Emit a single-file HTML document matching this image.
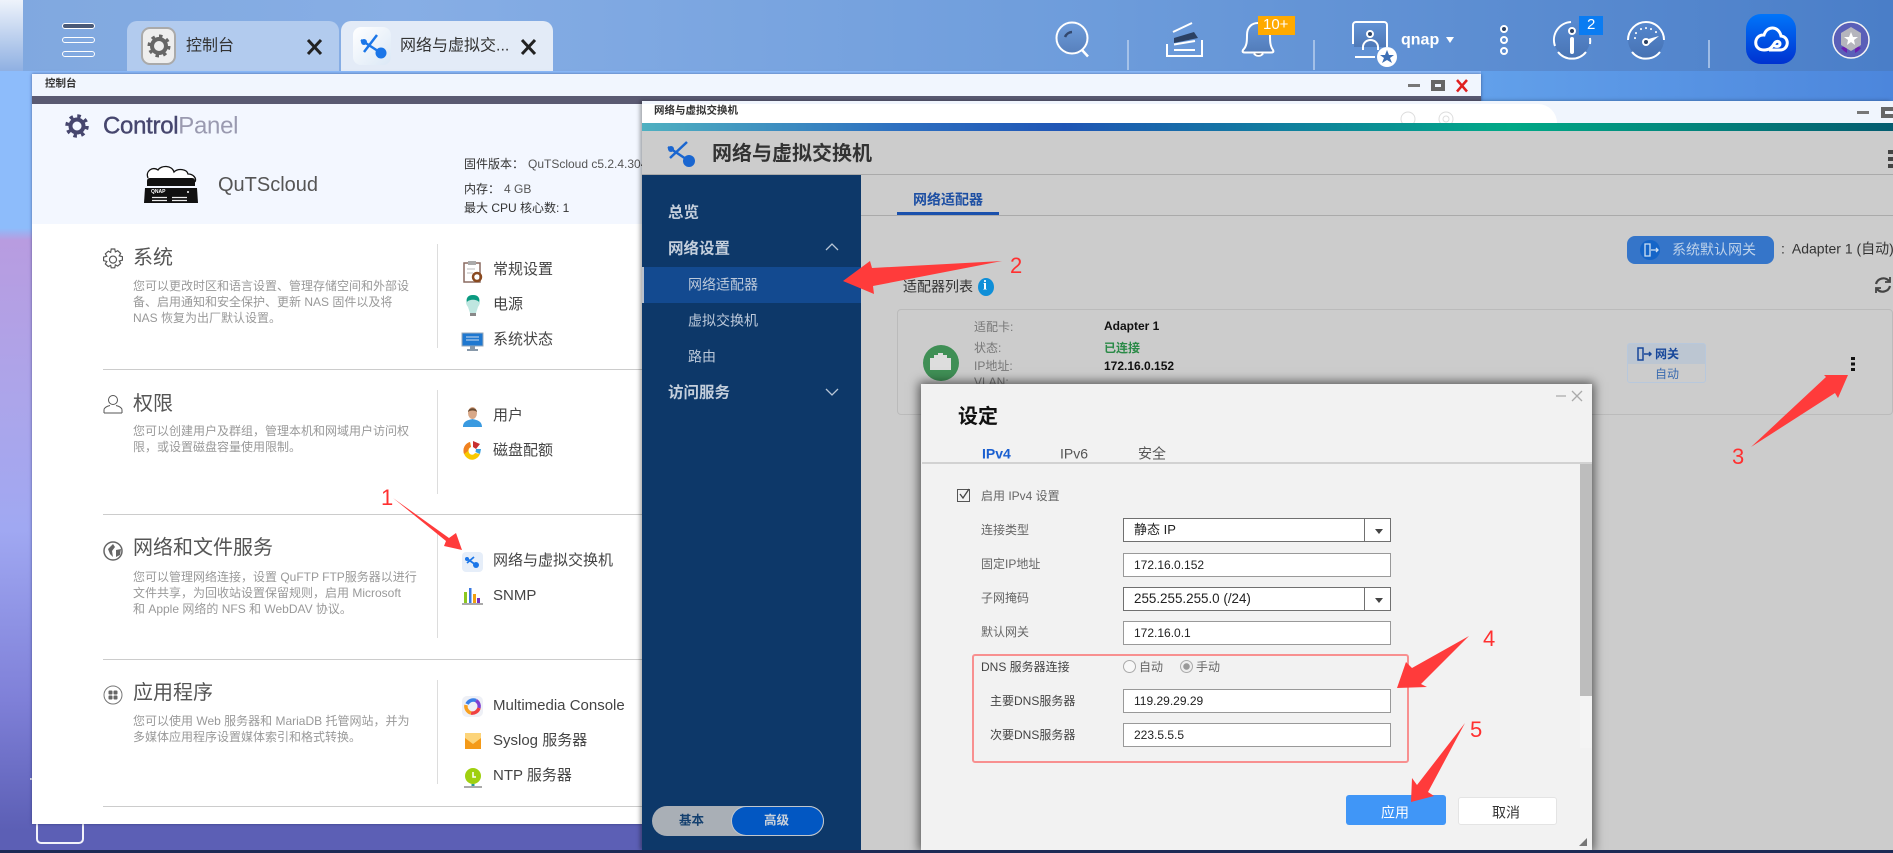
<!DOCTYPE html>
<html lang="zh"><head><meta charset="utf-8"><title>控制台</title>
<style>
html,body{margin:0;padding:0}
body{width:1893px;height:853px;overflow:hidden;position:relative;background:#5c5fb5;font-family:"Liberation Sans","Noto Sans CJK SC",sans-serif;color:#333}
.a{position:absolute}
.t{position:absolute;white-space:nowrap;transform:translateY(-50%);line-height:1.2}
svg{position:absolute;overflow:visible}
.h{font-size:20px;color:#555;left:133px;margin-top:1px}
.d{font-size:12px;color:#999;left:133px}
.i{font-size:15px;color:#444;left:493px}
.hl{position:absolute;left:103px;width:539px;height:1px;background:#ccc}
.vl{position:absolute;left:437px;width:1px;background:#ddd}
.nav{font-size:15.5px;font-weight:bold;color:#c4cfdc;left:668px;margin-top:2px}
.sub{font-size:14px;color:#bcc9da;left:688px;margin-top:1px}
.lb{font-size:12px;color:#777;left:974px}
.val{font-size:12px;font-weight:bold;color:#111;left:1104px}
.f{font-size:12px;color:#666;left:981px}
.inp{position:absolute;left:1123px;width:266px;height:22px;background:#fff;border:1px solid #999}
.sel{border-color:#707070}
.sel:after{content:"";position:absolute;right:25px;top:0;bottom:0;width:1px;background:#707070}
.sel:before{content:"";position:absolute;right:7px;top:10px;border:4px solid transparent;border-top:5px solid #444;border-bottom:0}
.v{font-size:12px;color:#222;left:1134px}
</style></head><body>

<!-- desktop -->
<div class="a" style="left:0;top:0;width:1893px;height:853px;background:linear-gradient(180deg,#8dbcfb 0,#8dbcfb 228px,#b89ce0 240px,#aca5ea 400px,#a0a8f2 530px,#7f80d8 700px,#5c5fb5 830px)"></div>
<div class="a" style="left:1481px;top:71px;width:412px;height:32px;background:linear-gradient(90deg,#62a0ea,#4c86dc)"></div>
<div class="a" style="left:36px;top:815px;width:48px;height:29px;border:2px solid #f2f2fa;border-radius:5px;box-sizing:border-box"></div>
<div class="a" style="left:30px;top:778px;width:3px;height:2px;background:#dde"></div>

<!-- top bar -->
<div class="a" style="left:0;top:0;width:1893px;height:71px;background:linear-gradient(90deg,#80a8df 0,#87aee5 400px,#6d9cdb 1100px,#4a7ec8 1893px)"></div>
<div class="a" style="left:0;top:0;width:23px;height:71px;background:linear-gradient(180deg,#eef3fb,#8fb0e2)"></div>
<div class="a" style="left:62px;top:23px;width:33px;height:6px;border-radius:3px;background:#4a5a78;border:1.5px solid #fff;box-sizing:border-box"></div>
<div class="a" style="left:62px;top:37px;width:33px;height:6px;border-radius:3px;border:1.5px solid #fff;box-sizing:border-box"></div>
<div class="a" style="left:62px;top:51px;width:33px;height:6px;border-radius:3px;border:1.5px solid #fff;box-sizing:border-box"></div>

<div class="a" style="left:127px;top:21px;width:212px;height:50px;background:#b2cbee;border-radius:10px 10px 0 0"></div>
<div class="a" style="left:141px;top:27px;width:35px;height:38px;background:#eee;border:2px solid #aaa;box-sizing:border-box;border-radius:9px"></div>
<svg style="left:146px;top:33px" width="26" height="26" viewBox="0 0 26 26"><circle cx="13" cy="13" r="7" fill="none" stroke="#666" stroke-width="4"/><circle cx="13" cy="13" r="10" fill="none" stroke="#666" stroke-width="3" stroke-dasharray="3.5 4.3"/></svg>
<span class="t" style="left:186px;top:46px;font-size:16px;color:#333">控制台</span>
<svg style="left:306px;top:38px" width="17" height="18"><path d="M2 2 15 16M15 2 2 16" stroke="#222" stroke-width="3"/></svg>

<div class="a" style="left:341px;top:21px;width:212px;height:50px;background:#e3ebf7;border-radius:10px 10px 0 0"></div>
<div class="a" style="left:353px;top:27px;width:38px;height:38px;background:linear-gradient(135deg,#fff,#dbe8f6);border-radius:8px"></div>
<svg style="left:357px;top:32px" width="30" height="28" viewBox="0 0 30 28"><path d="M20 3 7 20M4 8 24 21" stroke="#1b76e8" stroke-width="2.500"/><circle cx="24" cy="21" r="5.500" fill="#1b76e8"/><circle cx="7" cy="10" r="3" fill="#1b76e8"/></svg>
<span class="t" style="left:400px;top:46px;font-size:16px;color:#333">网络与虚拟交...</span>
<svg style="left:520px;top:38px" width="17" height="18"><path d="M2 2 15 16M15 2 2 16" stroke="#222" stroke-width="3"/></svg>

<!-- top right icons -->
<svg style="left:0;top:0" width="1893" height="71" fill="none" stroke="#fff" stroke-width="2">
<defs><linearGradient id="g" x1="0" y1="0" x2="0" y2="1"><stop offset="0" stop-color="#2c4a80" stop-opacity="0"/><stop offset="1" stop-color="#2c4a80" stop-opacity=".35"/></linearGradient></defs>
<circle cx="1072" cy="38" r="15.500" fill="url(#g)"/><path d="M1082 50 1088 56.500" stroke-width="2.500"/><path d="M1065 37a8 8 0 0 1 7-5" stroke="#33486e" stroke-width="2.500"/>
<path d="M1128 40V70M1314 40V70M1709 40V68" stroke="#b8cfee" stroke-width="1.500"/>
<path d="M1173 32 1192 23"/><path d="M1174 38 1194 32 1198 38 1174 43Z" fill="#2b4062" stroke="none"/><path d="M1174 44.500 1195 41M1174 50H1195"/><path d="M1167 44V56H1202V40"/>
<path d="M1247 35C1247 27 1252 23 1258 23 1265 23 1270 27 1270 35 1270 41 1270 46 1273 50 1274 52 1273 52.500 1271 52.500H1245C1243 52.500 1242 52 1243 50 1247 46 1247 41 1247 35Z" fill="url(#g)"/>
<path d="M1254 53.500a5 4 0 0 0 9 0" fill="#2b4062"/>
<path d="M1353 44V25A3 3 0 0 1 1356 22H1384A3 3 0 0 1 1387 25V47"/><path d="M1354 23H1386V47H1354Z" fill="url(#g)" stroke="none"/>
<path d="M1355 57H1375"/><circle cx="1370" cy="34" r="3" fill="#2b4062"/><path d="M1363 50V47a7.500 7 0 0 1 15 0V50"/>
<circle cx="1504" cy="29" r="3" fill="#2b4062"/><circle cx="1504" cy="40" r="3"/><circle cx="1504" cy="51" r="3"/>
<circle cx="1572" cy="40" r="18" fill="url(#g)" stroke="none"/>
<path d="M1571 22A18 18 0 0 0 1555 46M1558 52A18 18 0 0 0 1586 52M1590 38A18 18 0 0 1 1590 44"/>
<path d="M1572 39V52" stroke-width="4" stroke-linecap="round"/><circle cx="1572" cy="31" r="3" fill="#2b4062"/>
<circle cx="1646" cy="40" r="18" fill="url(#g)" stroke="none"/>
<path d="M1628 40A18 18 0 0 1 1664 40M1632 52A18 18 0 0 0 1660 52"/>
<path d="M1645 40 1659 36 1648 45Z" fill="#fff" stroke="none"/><circle cx="1646" cy="42" r="3" fill="#2b4062" stroke="#fff"/>
<path d="M1635 38v.1M1636 33v.1M1641 29v.1M1646 28v.1M1651 29v.1M1656 32v.1" stroke-width="2" stroke-linecap="round"/>
</svg>
<svg style="left:1377px;top:47px" width="20" height="20"><circle cx="10" cy="10" r="10" fill="#fff"/><path d="M10 3 12 8H17L13 11 15 16 10 13 5 16 7 11 3 8H8Z" fill="#3d6fb5"/></svg>
<div class="a" style="left:1258px;top:16px;width:37px;height:19px;background:#ffaa00"></div>
<span class="t" style="left:1263px;top:25px;font-size:15px;color:#fff">10+</span>
<span class="t" style="left:1401px;top:40px;font-size:16px;font-weight:bold;color:#fff">qnap</span>
<div class="a" style="left:1446px;top:37px;border:4.500px solid transparent;border-top:6px solid #fff;border-bottom:0"></div>
<div class="a" style="left:1579px;top:16px;width:24px;height:19px;background:#0a7cf2"></div>
<span class="t" style="left:1587px;top:25px;font-size:15px;color:#fff">2</span>
<div class="a" style="left:1746px;top:14px;width:50px;height:50px;border-radius:15px;background:linear-gradient(180deg,#0075fa,#0032d0)"></div>
<svg style="left:1746px;top:14px" width="50" height="50" fill="none" stroke="#fff" stroke-width="3"><path d="M23 36H34C43 36 44 23 35 22 33 12 21 11 18 21 8 20 6 36 18 36 24 36 26 33 28 30 30 26 34 27 34 30 34 33 29 33 28 31"/></svg>
<svg style="left:1832px;top:21px" width="38" height="38"><circle cx="19" cy="19" r="18" fill="#5a5fb8" stroke="#f4f4f4" stroke-width="1.500"/><path d="M9 27 15 24 15 32 12 30ZM29 27 23 24 23 32 26 30Z" fill="#6a1fb0"/><path d="M19 6 29 12V24L19 30 9 24V12Z" fill="#b5b5bd"/><path d="M19 11 21 16H26L22 19 23 24 19 21 15 24 16 19 12 16H17Z" fill="#fff"/></svg>

<!-- control panel window -->
<div class="a" style="left:32px;top:74px;width:1449px;height:750px;background:#fff;box-shadow:0 0 3px rgba(30,40,90,.6)"></div>
<div class="a" style="left:32px;top:74px;width:1449px;height:22px;background:#f1f6fe"></div>
<div class="a" style="left:32px;top:96px;width:1449px;height:8px;background:#5a5a72"></div>
<span class="t" style="left:45px;top:84px;font-size:10.5px;color:#333;font-weight:bold">控制台</span>
<div class="a" style="left:1408px;top:84px;width:12px;height:3px;background:#777"></div>
<div class="a" style="left:1431px;top:80px;width:14px;height:11px;border:4px solid #666;box-sizing:border-box"></div>
<svg style="left:1456px;top:80px" width="12" height="12"><path d="M1 0 11 11.500M11 0 1 11.500" stroke="#e02020" stroke-width="2.500"/></svg>
<div class="a" style="left:32px;top:104px;width:700px;height:120px;background:#f3f7ff"></div>
<div class="a" style="left:1300px;top:104px;width:260px;height:40px;background:#fff;border-radius:0 40px 0 0"></div>

<svg style="left:64px;top:113px" width="26" height="26" viewBox="0 0 26 26"><circle cx="13" cy="13" r="6.5" fill="none" stroke="#46466e" stroke-width="4"/><circle cx="13" cy="13" r="10" fill="none" stroke="#46466e" stroke-width="3.5" stroke-dasharray="3.5 4.35"/></svg>
<span class="t" style="left:103px;top:127px;font-size:24px;color:#46466e;letter-spacing:-.3px"><span style="font-weight:normal;-webkit-text-stroke:.4px #46466e">Control</span><span style="color:#9a9ab0">Panel</span></span>

<svg style="left:130px;top:110px" width="80" height="100" fill="none">
<path d="M148 178C145 171 153 166 158 170 161 165 172 165 174 172 178 168 187 169 188 174 193 174 197 178 195 182" transform="translate(-130 -110)" stroke="#111" stroke-width="1.300" fill="#fff"/>
<path d="M147 181Q147 178 150 178H192Q195 178 195 181V186H147Z" transform="translate(-130 -110)" fill="#111"/>
<path d="M145 188H197L198 203H144Z" transform="translate(-130 -110)" fill="#111"/>
<g transform="translate(-130 -110)" stroke="#eee" stroke-width="1.200"><path d="M152 197.500H167M172 197.500H187M152 200.500H167M172 200.500H187"/></g>
<circle cx="58" cy="82" r="1" fill="#fff"/>
</svg>
<span class="t" style="left:151px;top:192px;font-size:5px;font-weight:bold;color:#fff">QNAP</span>
<span class="t" style="left:218px;top:185px;font-size:20px;color:#555">QuTScloud</span>
<span class="t" style="left:464px;top:164px;font-size:12px;color:#333">固件版本&#65306;</span>
<span class="t" style="left:528px;top:164px;font-size:12px;color:#555">QuTScloud c5.2.4.3040</span>
<span class="t" style="left:464px;top:189px;font-size:12px;color:#333">内存&#65306;</span>
<span class="t" style="left:504px;top:189px;font-size:12px;color:#555">4 GB</span>
<span class="t" style="left:464px;top:208px;font-size:12px;color:#333">最大 CPU 核心数: 1</span>

<!-- sections -->
<svg style="left:103px;top:249px" width="20" height="20" viewBox="1.500 0.500 17 17" fill="none" stroke="#555"><circle cx="10" cy="9.500" r="3"/><path d="M8.500 1h3l.5 2.500 2-1 2.500 2.200-1.200 2.100 2.700.7v3l-2.700.7 1.200 2.100-2.500 2.200-2-1-.5 2.500h-3L8 14.900l-2 1L3.500 13.700l1.200-2.100L2 10.900v-3l2.700-.7L3.500 5.100 6 2.900l2 1Z" transform="translate(0 -.5)"/></svg>
<span class="t h" style="top:257px">系统</span>
<span class="t d" style="top:286px">您可以更改时区和语言设置、管理存储空间和外部设</span>
<span class="t d" style="top:302px">备、启用通知和安全保护、更新 NAS 固件以及将</span>
<span class="t d" style="top:318px">NAS 恢复为出厂默认设置。</span>
<div class="vl" style="top:244px;height:104px"></div>
<svg style="left:463px;top:261px" width="20" height="22"><rect x="1" y="2" width="16" height="19" fill="#fff" stroke="#8a6a60" stroke-width="1.500"/><rect x="5" y="0" width="8" height="4" fill="#aaa"/><path d="M4 8H12M4 12H10" stroke="#bbb"/><circle cx="14" cy="16" r="4" fill="none" stroke="#8a4a20" stroke-width="2.500"/></svg>
<span class="t i" style="top:270px">常规设置</span>
<svg style="left:465px;top:295px" width="16" height="22"><path d="M8 0C1 0-1 7 3 12L5 18H11L13 12C17 7 15 0 8 0Z" fill="#bfe6e0"/><path d="M8 0C3 0 1 3 2 7 4 4 12 4 14 7 15 3 13 0 8 0Z" fill="#0a9a80"/><rect x="5" y="18" width="6" height="3" fill="#888"/></svg>
<span class="t i" style="top:305px">电源</span>
<svg style="left:462px;top:333px" width="21" height="18"><rect width="21" height="13" fill="#1f78d0" stroke="#9ab"/><path d="M4 4H17M4 7H17" stroke="#cde"/><rect x="8" y="13" width="5" height="3" fill="#89a"/><rect x="5" y="16" width="11" height="2" fill="#89a"/></svg>
<span class="t i" style="top:340px">系统状态</span>
<div class="hl" style="top:369px"></div>

<svg style="left:103px;top:394px" width="20" height="20" fill="none" stroke="#555"><circle cx="10" cy="6" r="4.500"/><path d="M1 19V16C1 13 5 12 7 11.500M19 19V16C19 13 15 12 13 11.500M1 19H19"/></svg>
<span class="t h" style="top:403px">权限</span>
<span class="t d" style="top:431px">您可以创建用户及群组&#65292;管理本机和网域用户访问权</span>
<span class="t d" style="top:447px">限&#65292;或设置磁盘容量使用限制。</span>
<div class="vl" style="top:390px;height:104px"></div>
<svg style="left:463px;top:407px" width="19" height="20"><path d="M0 20C0 14 5 13 9.500 12 14 13 19 14 19 20Z" fill="#3a9ae0"/><ellipse cx="9.500" cy="6" rx="4.500" ry="6" fill="#d8a888"/><path d="M5 5C5 0 14 0 14 5 12 3 7 3 5 5Z" fill="#6a4a30"/></svg>
<span class="t i" style="top:416px">用户</span>
<svg style="left:463px;top:441px" width="18" height="19"><path d="M7 1A8.500 9 0 1 0 17 13L12 12A3.500 4 0 1 1 8 6Z" fill="#f8c800"/><path d="M7 1A8.500 9 0 0 0 1 13L5 10A3.500 4 0 0 1 8 6Z" fill="#f08020"/><path d="M10 0 17 3 13 8 10 6Z" fill="#c83030"/><path d="M13 8 18 8 17 13 12.500 11Z" fill="#38a0e0"/></svg>
<span class="t i" style="top:451px">磁盘配额</span>
<div class="hl" style="top:514px"></div>

<svg style="left:103px;top:541px" width="20" height="20"><circle cx="10" cy="10" r="9" fill="#fff" stroke="#666" stroke-width="1.500"/><path d="M5 8 10 3 12 6 9 10 10 16 7 13ZM13 9 18 8 17 14 13 16Z" fill="#666"/></svg>
<span class="t h" style="top:547px">网络和文件服务</span>
<span class="t d" style="top:577px">您可以管理网络连接&#65292;设置 QuFTP FTP服务器以进行</span>
<span class="t d" style="top:593px">文件共享&#65292;为回收站设置保留规则&#65292;启用 Microsoft</span>
<span class="t d" style="top:609px">和 Apple 网络的 NFS 和 WebDAV 协议。</span>
<div class="vl" style="top:534px;height:104px"></div>
<div class="a" style="left:462px;top:552px;width:21px;height:20px;background:#e6eef9;border-radius:4px"></div>
<svg style="left:462px;top:552px" width="21" height="20"><path d="M12 5 5 11M4 6 14 13" stroke="#1b76e8" stroke-width="1.800"/><circle cx="14" cy="13" r="3" fill="#1b76e8"/><circle cx="5" cy="7" r="2" fill="#1b76e8"/></svg>
<span class="t i" style="top:561px">网络与虚拟交换机</span>
<svg style="left:462px;top:588px" width="21" height="17"><rect x="2" y="4" width="3" height="11" fill="#8cc820"/><rect x="7" y="0" width="2.500" height="15" fill="#3878e0"/><rect x="11" y="6" width="3" height="9" fill="#f0a010"/><rect x="15" y="10" width="3" height="5" fill="#7a30c0"/><rect y="15" width="21" height="2" fill="#aaa"/></svg>
<span class="t i" style="top:596px">SNMP</span>
<div class="hl" style="top:659px"></div>

<svg style="left:103px;top:685px" width="20" height="20"><circle cx="10" cy="10" r="9" fill="#fff" stroke="#777"/><rect x="5.500" y="5.500" width="4" height="4" rx="1" fill="#666"/><rect x="10.500" y="5.500" width="4" height="4" rx="1" fill="#666"/><rect x="5.500" y="10.500" width="4" height="4" rx="1" fill="#666"/><rect x="10.500" y="10.500" width="4" height="4" rx="1" fill="#666"/></svg>
<span class="t h" style="top:692px">应用程序</span>
<span class="t d" style="top:721px">您可以使用 Web 服务器和 MariaDB 托管网站&#65292;并为</span>
<span class="t d" style="top:737px">多媒体应用程序设置媒体索引和格式转换。</span>
<div class="vl" style="top:680px;height:104px"></div>
<div class="a" style="left:462px;top:696px;width:21px;height:21px;background:#eef0f6;border-radius:5px"></div>
<svg style="left:464px;top:698px" width="17" height="17" fill="none" stroke-width="3.500"><path d="M3 6A7 7 0 0 1 12 2.500" stroke="#3a80e8"/><path d="M12 2.500A7 7 0 0 1 15 10" stroke="#8040d0"/><path d="M15 10A7 7 0 0 1 7 15" stroke="#f04040"/><path d="M7 15A7 7 0 0 1 2 7" stroke="#f8a020"/></svg>
<span class="t i" style="top:706px">Multimedia Console</span>
<svg style="left:465px;top:733px" width="16" height="16"><rect width="16" height="16" fill="#fcd47a"/><path d="M0 5 8 11 16 5V16H0Z" fill="#f49a18"/></svg>
<span class="t i" style="top:741px">Syslog 服务器</span>
<svg style="left:464px;top:768px" width="18" height="20"><circle cx="9" cy="8" r="8" fill="#a0d010"/><path d="M9 4V9H12" stroke="#fff" fill="none" stroke-width="1.500"/><path d="M9 16V19" stroke="#2a9a90" stroke-width="3"/><rect y="18" width="18" height="2" fill="#aaa"/></svg>
<span class="t i" style="top:776px">NTP 服务器</span>
<div class="hl" style="top:806px"></div>

<!-- network window -->
<div class="a" style="left:642px;top:101px;width:1251px;height:749px;background:#ccc;box-shadow:-2px 0 4px rgba(0,0,0,.35)"></div>
<div class="a" style="left:642px;top:101px;width:1251px;height:22px;background:#f0f5fd"></div>
<div class="a" style="left:642px;top:104px;width:839px;height:19px;background:#fff"></div>
<div class="a" style="left:1481px;top:104px;width:76px;height:19px;background:#fff;border-radius:0 30px 0 0"></div>
<svg style="left:1398px;top:104px" width="60" height="19" fill="none" stroke="#ddd"><circle cx="10" cy="15" r="7"/><circle cx="48" cy="15" r="7"/><circle cx="48" cy="15" r="3"/></svg>
<div class="a" style="left:642px;top:123px;width:1251px;height:8px;background:linear-gradient(90deg,#4fb0c0 0,#2d6fc0 258px,#1f55b5 422px,#00a986 867px,#045c70 1251px)"></div>
<span class="t" style="left:654px;top:111px;font-size:10.5px;font-weight:bold;color:#333">网络与虚拟交换机</span>
<div class="a" style="left:1857px;top:111px;width:12px;height:3px;background:#777"></div>
<div class="a" style="left:1881px;top:107px;width:12px;height:11px;border:4px solid #666;border-right:0;box-sizing:border-box"></div>
<svg style="left:664px;top:140px" width="32" height="28"><path d="M23 2 6 18M4 7 25 21" stroke="#1a66d0" stroke-width="2.500"/><circle cx="25" cy="21" r="6" fill="#1a66d0"/><circle cx="7" cy="9" r="3" fill="#1a66d0"/></svg>
<span class="t" style="left:712px;top:154px;font-size:20px;font-weight:bold;color:#333">网络与虚拟交换机</span>
<div class="a" style="left:1888px;top:150px;width:5px;height:18px;background:repeating-linear-gradient(180deg,#444 0 4px,transparent 4px 7px)"></div>
<div class="a" style="left:642px;top:174px;width:1251px;height:1px;background:#aaa"></div>

<div class="a" style="left:642px;top:175px;width:219px;height:675px;background:#0d3869"></div>
<span class="t nav" style="top:212px">总览</span>
<span class="t nav" style="top:248px">网络设置</span>
<svg style="left:825px;top:243px" width="14" height="8" fill="none" stroke="#b8c6d6" stroke-width="1.300"><path d="M1 7 7 1 13 7"/></svg>
<div class="a" style="left:642px;top:267px;width:219px;height:36px;background:#134a90"></div>
<div class="a" style="left:642px;top:267px;width:2px;height:36px;background:#b8c0cc"></div>
<span class="t sub" style="top:284px">网络适配器</span>
<span class="t sub" style="top:320px">虚拟交换机</span>
<span class="t sub" style="top:356px">路由</span>
<span class="t nav" style="top:392px">访问服务</span>
<svg style="left:825px;top:388px" width="14" height="8" fill="none" stroke="#b8c6d6" stroke-width="1.300"><path d="M1 1 7 7 13 1"/></svg>

<div class="a" style="left:652px;top:806px;width:172px;height:30px;background:#a9afb6;border-radius:15px"></div>
<div class="a" style="left:732px;top:807px;width:91px;height:28px;background:#0257c2;border-radius:14px;box-shadow:0 0 0 1px #c0c6cc"></div>
<span class="t" style="left:679px;top:821px;font-size:12.500px;font-weight:bold;color:#14406f">基本</span>
<span class="t" style="left:764px;top:821px;font-size:12.500px;font-weight:bold;color:#c8d0da">高级</span>

<span class="t" style="left:913px;top:200px;font-size:14px;font-weight:bold;color:#1d4fa3">网络适配器</span>
<div class="a" style="left:861px;top:215px;width:1032px;height:1px;background:#aaa"></div>
<div class="a" style="left:897px;top:212px;width:102px;height:3px;background:#1a50ac"></div>

<div class="a" style="left:1627px;top:236px;width:147px;height:28px;background:#3575c9;border-radius:8px"></div>
<div class="a" style="left:1640px;top:240px;width:20px;height:20px;background:#1565c8;border-radius:50%"></div>
<svg style="left:1644px;top:243px" width="16" height="14" fill="none" stroke="#cfe0f2" stroke-width="1.300"><path d="M1 1H6V13H1ZM7 7H14M12 5 14 7 12 9"/></svg>
<span class="t" style="left:1672px;top:250px;font-size:14px;color:#bed2ea">系统默认网关</span>
<span class="t" style="left:1781px;top:249px;font-size:14px;color:#333">:&nbsp; Adapter 1 (自动)</span>
<span class="t" style="left:903px;top:287px;font-size:14px;color:#333">适配器列表</span>
<div class="a" style="left:978px;top:278px;width:16px;height:18px;background:#0f8fd8;border-radius:50%"></div>
<span class="t" style="left:983px;top:287px;font-size:14px;font-weight:bold;color:#fff;font-family:'Liberation Serif',serif">i</span>
<svg style="left:1874px;top:276px" width="18" height="18" fill="none" stroke="#444" stroke-width="2.200"><path d="M15 5A7.500 7.500 0 0 0 2 8M3 13A7.500 7.500 0 0 0 16 10"/><path d="M16 1V6H11M2 17V12H7" stroke-width="1.800"/></svg>

<div class="a" style="left:897px;top:309px;width:996px;height:106px;border:1px solid #bbb;border-radius:4px;box-sizing:border-box"></div>
<div class="a" style="left:923px;top:345px;width:36px;height:36px;background:#3f8f55;border-radius:50%"></div>
<svg style="left:930px;top:353px" width="22" height="18"><path d="M0 17V5H4V2H8V0H13V2H17V5H21V17Z" fill="#ddd"/></svg>
<span class="t lb" style="top:327px">适配卡:</span>
<span class="t lb" style="top:348px">状态:</span>
<span class="t lb" style="top:366px">IP地址:</span>
<span class="t lb" style="top:382px">VLAN:</span>
<span class="t val" style="top:326px">Adapter 1</span>
<span class="t val" style="top:348px;color:#2a8a47">已连接</span>
<span class="t val" style="top:366px">172.16.0.152</span>

<div class="a" style="left:1627px;top:343px;width:79px;height:40px;border:1px solid #b8c8dc;border-radius:3px;box-sizing:border-box;background:linear-gradient(180deg,#bcc6d2 0,#bcc6d2 20px,#ccc 20px)"></div>
<svg style="left:1637px;top:347px" width="16" height="14" fill="none" stroke="#17479a" stroke-width="1.500"><path d="M1 1H6V13H1ZM7 7H14M12 5 14 7 12 9"/></svg>
<span class="t" style="left:1655px;top:354px;font-size:12px;font-weight:bold;color:#17479a">网关</span>
<span class="t" style="left:1655px;top:374px;font-size:12px;color:#3a6bb0">自动</span>
<div class="a" style="left:1851px;top:357px;width:4px;height:14px;background:repeating-linear-gradient(180deg,#111 0 3px,transparent 3px 5.500px)"></div>

<!-- dialog -->
<div class="a" style="left:921px;top:384px;width:671px;height:466px;background:#f2f2f2;box-shadow:0 0 10px 2px rgba(0,0,0,.6)"></div>
<svg style="left:1555px;top:390px" width="32" height="12" stroke="#aaa" stroke-width="1.300" fill="none"><path d="M1 6H11M17 1 27 11M27 1 17 11"/></svg>
<span class="t" style="left:958px;top:417px;font-size:20px;font-weight:bold;color:#111">设定</span>
<span class="t" style="left:982px;top:454px;font-size:14px;font-weight:bold;color:#1a5fd0">IPv4</span>
<span class="t" style="left:1060px;top:454px;font-size:14px;color:#555">IPv6</span>
<span class="t" style="left:1138px;top:454px;font-size:14px;color:#555">安全</span>
<div class="a" style="left:922px;top:462px;width:670px;height:2px;background:#d2d2d2"></div>
<div class="a" style="left:1580px;top:464px;width:12px;height:232px;background:#bdbdbd"></div>
<div class="a" style="left:1580px;top:696px;width:12px;height:52px;background:#f4f4f4"></div>

<div class="a" style="left:957px;top:489px;width:11px;height:11px;border:1px solid #555"></div>
<svg style="left:958px;top:488px" width="13" height="12" fill="none" stroke="#444" stroke-width="1.300"><path d="M2 6 5 10 11 1"/></svg>
<span class="t f" style="top:496px">启用 IPv4 设置</span>
<span class="t f" style="top:530px">连接类型</span>
<div class="inp sel" style="top:518px"></div><span class="t v" style="top:530px;font-size:13px">静态 IP</span>
<span class="t f" style="top:564px">固定IP地址</span>
<div class="inp" style="top:553px"></div><span class="t v" style="top:565px">172.16.0.152</span>
<span class="t f" style="top:598px">子网掩码</span>
<div class="inp sel" style="top:587px"></div><span class="t v" style="top:599px;font-size:13.400px">255.255.255.0 (/24)</span>
<span class="t f" style="top:632px">默认网关</span>
<div class="inp" style="top:621px"></div><span class="t v" style="top:633px">172.16.0.1</span>

<div class="a" style="left:972px;top:654px;width:437px;height:109px;border:2px solid #f89090;border-radius:3px;box-sizing:border-box"></div>
<span class="t f" style="top:667px;color:#444">DNS 服务器连接</span>
<div class="a" style="left:1123px;top:660px;width:11px;height:11px;border:1px solid #aaa;border-radius:50%;background:#f8f8f8"></div>
<span class="t f" style="left:1139px;top:667px">自动</span>
<div class="a" style="left:1180px;top:660px;width:11px;height:11px;border:1px solid #aaa;border-radius:50%;background:radial-gradient(circle,#999 0 3px,#eee 3.500px)"></div>
<span class="t f" style="left:1196px;top:667px">手动</span>
<span class="t f" style="left:990px;top:701px;color:#444">主要DNS服务器</span>
<div class="inp" style="top:689px"></div><span class="t v" style="top:701px">119.29.29.29</span>
<span class="t f" style="left:990px;top:735px;color:#444">次要DNS服务器</span>
<div class="inp" style="top:723px"></div><span class="t v" style="top:735px">223.5.5.5</span>

<div class="a" style="left:1346px;top:795px;width:100px;height:30px;background:#4096f7;border-radius:3px"></div>
<span class="t" style="left:1381px;top:813px;font-size:14px;color:#fff">应用</span>
<div class="a" style="left:1458px;top:797px;width:99px;height:28px;background:#fff;border:1px solid #e4e4e4;border-radius:3px;box-sizing:border-box"></div>
<span class="t" style="left:1492px;top:813px;font-size:14px;color:#333">取消</span>
<svg style="left:1579px;top:838px" width="9" height="9"><path d="M8 0V8H0Z" fill="#777"/></svg>
<div class="a" style="left:0;top:850px;width:1893px;height:3px;background:#1d2a55"></div>

<!-- annotations -->
<svg style="left:0;top:0" width="1893" height="853" fill="#ff3b3b">
<path d="M393 498 449 538 456 533 462 550 444 546 446 541Z"/>
<path d="M1002 261 872 268 870 261 843 281 874 294 873 286Z"/>
<path d="M1751 447 1826 377 1824 375 1848 375 1838 398 1835 393Z"/>
<path d="M1469 636 1421 684 1427 687 1397 688 1406 662 1412 668Z"/>
<path d="M1465 723 1428 792 1434 796 1411 802 1412 778 1417 785Z"/>
<text x="381" y="505" font-size="22" font-family="Liberation Sans" fill="#ff3030">1</text>
<text x="1010" y="273" font-size="22" font-family="Liberation Sans" fill="#ff3030">2</text>
<text x="1732" y="464" font-size="22" font-family="Liberation Sans" fill="#ff3030">3</text>
<text x="1483" y="646" font-size="22" font-family="Liberation Sans" fill="#ff3030">4</text>
<text x="1470" y="737" font-size="22" font-family="Liberation Sans" fill="#ff3030">5</text>
</svg>
</body></html>
